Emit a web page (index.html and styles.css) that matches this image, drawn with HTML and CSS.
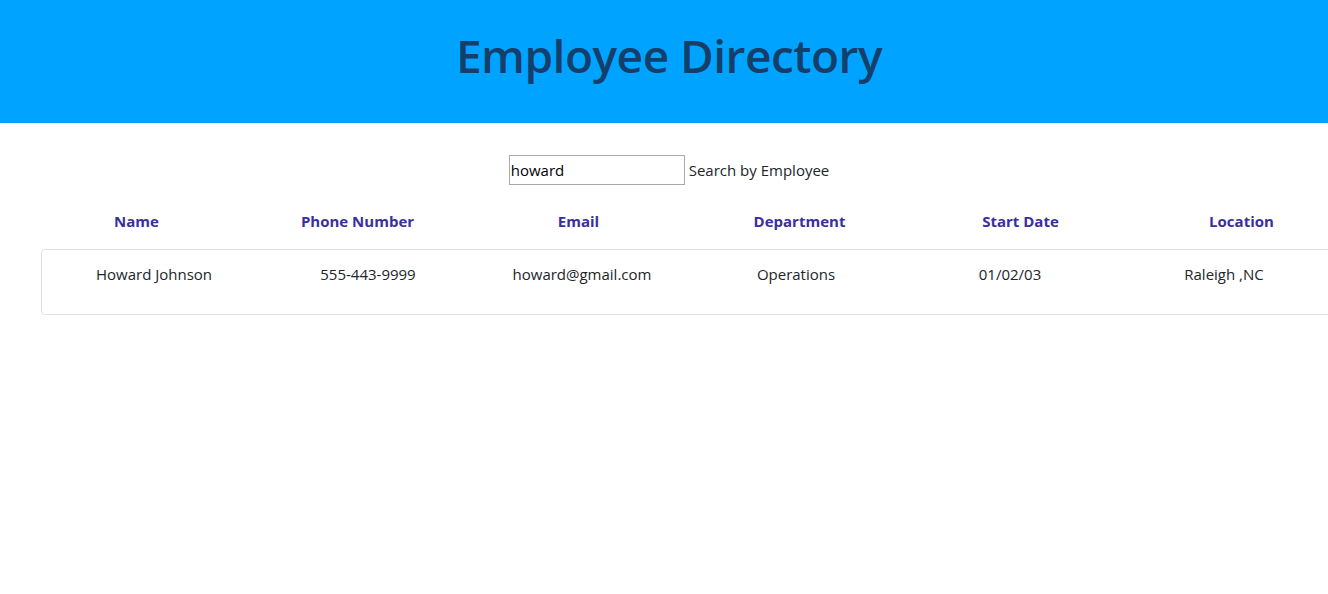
FILE: index.html
```html
<!DOCTYPE html>
<html>
<head>
<meta charset="utf-8">
<link rel="stylesheet" href="styles.css">
</head>
<body>
<header class="banner">
  <h1 class="title">Employee Directory</h1>
</header>
<main class="page">
  <form class="search">
    <input class="search-input" type="text" value="howard">
    <label class="search-label">Search by Employee</label>
  </form>
  <div class="table-head">
    <div class="th">Name</div>
    <div class="th">Phone Number</div>
    <div class="th">Email</div>
    <div class="th">Department</div>
    <div class="th">Start Date</div>
    <div class="th">Location</div>
  </div>
  <div class="card">
    <div class="row">
      <div class="td">Howard Johnson</div>
      <div class="td">555-443-9999</div>
      <div class="td">howard@gmail.com</div>
      <div class="td">Operations</div>
      <div class="td">01/02/03</div>
      <div class="td">Raleigh ,NC</div>
    </div>
  </div>
</main>
</body>
</html>
```
FILE: styles.css
```css
html, body {
  margin: 0;
  padding: 0;
  overflow: hidden;
  background: #fff;
  font-family: "Open Sans", "Noto Sans", sans-serif;
  color: #212529;
}
.banner {
  height: 123px;
  box-sizing: border-box;
  padding-bottom: 13px;
  background: #00a3ff;
  display: flex;
  align-items: center;
  justify-content: center;
  width: 1338px;
}
.title {
  margin: 0;
  font-size: 46px;
  font-weight: 600;
  color: #143f6b;
  letter-spacing: -0.5px;
}
.page {
  width: 1338px;
}
.search {
  display: flex;
  justify-content: center;
  align-items: center;
  gap: 4px;
  margin: 32px 0 0;
  font-size: 15px;
}
.search-input {
  width: 172px;
  height: 24px;
  padding: 2px 1px;
  border: 1px solid #a9a9a9;
  font-family: inherit;
  font-size: 15px;
  color: #000;
  outline: none;
}
.search-label {
  color: #212529;
}
.table-head {
  display: grid;
  grid-template-columns: repeat(6, 221px);
  margin: 24px 0 0 26px;
  height: 24px;
  align-items: center;
}
.th {
  text-align: center;
  font-weight: 700;
  font-size: 15px;
  color: #3a2f9e;
}
.card {
  margin: 16px 0 0 41px;
  width: 1320px;
  border: 1px solid #dee2e6;
  border-radius: 4px;
  padding: 12px 0 28px 5px;
  box-sizing: border-box;
}
.row {
  display: grid;
  grid-template-columns: repeat(6, 214px);
  height: 24px;
  align-items: center;
}
.td {
  text-align: center;
  font-size: 15px;
}
```
